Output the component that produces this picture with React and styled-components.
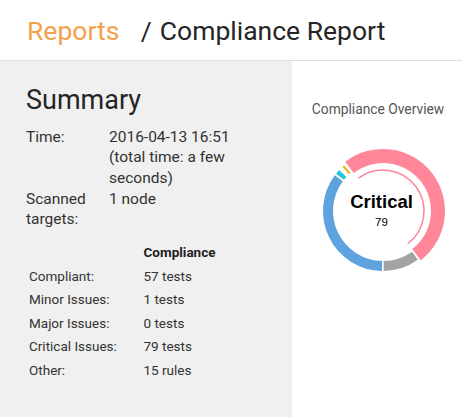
import React from "react";
import styled, { createGlobalStyle } from "styled-components";

const Global = createGlobalStyle`
  html, body { margin: 0; padding: 0; background: #fff; }
  body { font-family: Roboto, "Noto Sans", sans-serif; color: #333; }
`;

const Page = styled.div`
  width: 462px;
  height: 417px;
  overflow: hidden;
  display: flex;
  flex-direction: column;
`;

const Header = styled.header`
  height: 60px;
  flex: none;
  border-bottom: 1px solid #dedede;
  display: flex;
  align-items: center;
  padding-left: 27px;
  font-size: 26.5px;
  line-height: normal;
  color: #252525;
`;

const Crumb = styled.span`
  color: #f4a04b;
`;

const Sep = styled.span`
  margin: 0 8px 0 21.5px;
  color: #252525;
`;

const Main = styled.div`
  flex: 1;
  display: grid;
  grid-template-columns: 292px 1fr;
`;

const SummaryPanel = styled.section`
  background: #f0f0f0;
  padding: 22.5px 0 0 26px;
`;

const Title = styled.h2`
  margin: 0;
  font-size: 27px;
  font-weight: 400;
  line-height: 32px;
  color: #252525;
`;

const Details = styled.dl`
  margin: 11px 0 0;
  display: grid;
  grid-template-columns: 83px 150px;
  font-size: 15.5px;
  line-height: 20.7px;
  color: #333;
`;

const Term = styled.dt`
  margin: 0;
`;

const Desc = styled.dd`
  margin: 0;
`;

const Table = styled.div`
  margin: 11px 0 0 3px;
  display: grid;
  grid-template-columns: 114.5px auto;
  font-size: 13.5px;
  line-height: 23.6px;
  color: #333;
`;

const Cell = styled.div`
  font-weight: ${(p) => (p.$head ? 700 : 400)};
  color: ${(p) => (p.$head ? "#222" : "#333")};
`;

const ChartPanel = styled.section`
  background: #fff;
  padding-top: 40px;
  display: flex;
  flex-direction: column;
`;

const ChartTitle = styled.div`
  text-align: center;
  font-size: 13.8px;
  line-height: 16px;
  color: #555;
  padding-left: 2px;
`;

const Donut = styled.svg`
  display: block;
  margin-top: 23.7px;
  width: 170px;
  height: 140px;
`;

const CX = 91;
const CY = 70;

const pt = (r, a) => {
  const rad = (a * Math.PI) / 180;
  return [CX + r * Math.sin(rad), CY - r * Math.cos(rad)];
};

const sector = (r0, r1, a0, a1) => {
  const large = a1 - a0 > 180 ? 1 : 0;
  const [x0, y0] = pt(r1, a0);
  const [x1, y1] = pt(r1, a1);
  const [x2, y2] = pt(r0, a1);
  const [x3, y3] = pt(r0, a0);
  return `M${x0} ${y0} A${r1} ${r1} 0 ${large} 1 ${x1} ${y1} L${x2} ${y2} A${r0} ${r0} 0 ${large} 0 ${x3} ${y3} Z`;
};

const arc = (r, a0, a1) => {
  const large = a1 - a0 > 180 ? 1 : 0;
  const [x0, y0] = pt(r, a0);
  const [x1, y1] = pt(r, a1);
  return `M${x0} ${y0} A${r} ${r} 0 ${large} 1 ${x1} ${y1}`;
};

const segments = [
  { color: "#a3a3a3", r0: 50, r1: 60, a0: 144.5, a1: 179.3 },
  { color: "#5ea3e0", r0: 50, r1: 60, a0: 181, a1: 306.5 },
  { color: "#27c7d8", r0: 50, r1: 60, a0: 308.5, a1: 313 },
  { color: "#f0ab00", r0: 50, r1: 60, a0: 317.5, a1: 319.5 },
  { color: "#ff8799", r0: 48, r1: 62, a0: 322.5, a1: 502.5 },
];

const rows = [
  ["Compliant:", "57 tests"],
  ["Minor Issues:", "1 tests"],
  ["Major Issues:", "0 tests"],
  ["Critical Issues:", "79 tests"],
  ["Other:", "15 rules"],
];

export default function App() {
  return (
    <Page>
      <Global />
      <Header>
        <Crumb>Reports</Crumb>
        <Sep>/</Sep>
        <span>Compliance Report</span>
      </Header>
      <Main>
        <SummaryPanel>
          <Title>Summary</Title>
          <Details>
            <Term>Time:</Term>
            <Desc>2016-04-13 16:51 (total time: a few seconds)</Desc>
            <Term>Scanned targets:</Term>
            <Desc>1 node</Desc>
          </Details>
          <Table>
            <Cell />
            <Cell $head>Compliance</Cell>
            {rows.map(([l, v]) => (
              <React.Fragment key={l}>
                <Cell>{l}</Cell>
                <Cell>{v}</Cell>
              </React.Fragment>
            ))}
          </Table>
        </SummaryPanel>
        <ChartPanel>
          <ChartTitle>Compliance Overview</ChartTitle>
          <Donut viewBox="0 0 170 140">
            {segments.map((s, i) => (
              <path key={i} d={sector(s.r0, s.r1, s.a0, s.a1)} fill={s.color} />
            ))}
            <path d={arc(41, 323.5, 503)} fill="none" stroke="#ff8799" strokeWidth="1.5" />
            <text
              x="89.5"
              y="66.7"
              textAnchor="middle"
              fontFamily="'Liberation Sans', Arial, sans-serif"
              fontWeight="700"
              fontSize="18.5"
              fill="#000"
            >
              Critical
            </text>
            <text
              x="89.5"
              y="85"
              textAnchor="middle"
              fontFamily="'Liberation Sans', Arial, sans-serif"
              fontSize="11.5"
              fill="#000"
            >
              79
            </text>
          </Donut>
        </ChartPanel>
      </Main>
    </Page>
  );
}
